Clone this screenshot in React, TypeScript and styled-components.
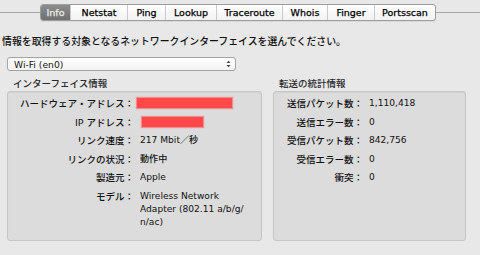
import React from 'react';
import styled, { createGlobalStyle } from 'styled-components';

const GlobalStyle = createGlobalStyle`
  html, body {
    margin: 0;
    padding: 0;
    background: #e8e8e8;
  }
`;

const Window = styled.div`
  width: 480px;
  height: 255px;
  overflow: hidden;
  background: #e8e8e8;
  font-family: 'DejaVu Sans', 'Noto Sans CJK JP', sans-serif;
  font-size: 9.5px;
  font-weight: 500;
  color: #111;
  display: flex;
  flex-direction: column;
`;

const TabRow = styled.div`
  display: flex;
  align-items: center;
  padding-top: 4px;
`;

const Rule = styled.div<{ $w?: number }>`
  height: 1px;
  background: #a6a6a6;
  ${(p) => (p.$w ? `width: ${p.$w}px;` : 'flex: 1;')}
`;

const Tabs = styled.div`
  display: flex;
  height: 17px;
  border: 1px solid #9d9d9d;
  border-radius: 3px;
  box-sizing: border-box;
  background: linear-gradient(#ffffff, #f2f2f2);
  box-shadow: 0 1px 0 rgba(0, 0, 0, 0.06);
  overflow: hidden;
`;

const Tab = styled.div<{ $active?: boolean; $w: number }>`
  width: ${(p) => p.$w}px;
  display: flex;
  align-items: center;
  justify-content: center;
  font-size: 9.5px;
  color: ${(p) => (p.$active ? '#ececec' : '#000')};
  background: ${(p) => (p.$active ? 'linear-gradient(#8c8c8c, #707070)' : 'transparent')};
  -webkit-text-stroke: 0.25px ${(p) => (p.$active ? '#ececec' : '#000')};
  & + & {
    border-left: 1px solid #c9c9c9;
  }
`;

const Prompt = styled.div`
  margin: 14px 0 0 2px;
  line-height: 13px;
  font-size: 9.9px;
`;

const Popup = styled.div`
  margin: 9px 0 0 7px;
  width: 229px;
  height: 14px;
  box-sizing: border-box;
  border: 1px solid #a3a3a3;
  border-radius: 3px;
  background: linear-gradient(#ffffff, #f3f3f3);
  display: flex;
  align-items: center;
  justify-content: space-between;
  padding: 0 4px 0 6px;
  font-size: 9.2px;
`;

const Arrows = styled.svg`
  width: 5px;
  height: 8px;
`;

const Panels = styled.div`
  display: grid;
  grid-template-columns: 255px 193px;
  column-gap: 11px;
  padding: 6px 0 0 7px;
`;

const Section = styled.div`
  display: flex;
  flex-direction: column;
`;

const SectionTitle = styled.div`
  padding-left: 6px;
  line-height: 13px;
  font-size: 9.5px;
  color: #2a2a2a;
  margin-bottom: 1px;
`;

const Box = styled.div<{ $label: number }>`
  height: 150px;
  box-sizing: border-box;
  border: 1px solid #c6c6c6;
  border-radius: 3px;
  background: #dcdcdc;
  box-shadow: inset 0 1px 1px rgba(0, 0, 0, 0.05);
  display: grid;
  grid-template-columns: ${(p) => p.$label}px 1fr;
  column-gap: 6px;
  row-gap: 5.6px;
  align-content: start;
  padding-top: 5px;
`;

const Label = styled.div`
  text-align: right;
  line-height: 13px;
  white-space: nowrap;
`;

const Value = styled.div`
  line-height: 13px;
  padding-right: 6px;
  font-size: 9.1px;
`;

const Redact = styled.span<{ $w: number; $ml: number }>`
  display: block;
  width: ${(p) => p.$w}px;
  height: 10px;
  margin: 1px 0 0 ${(p) => p.$ml}px;
  background: #ff4848;
  box-shadow: 0 0 1px 1px rgba(255, 90, 90, 0.6);
`;

const tabs = [
  { name: 'Info', w: 29, active: true },
  { name: 'Netstat', w: 56 },
  { name: 'Ping', w: 37 },
  { name: 'Lookup', w: 50 },
  { name: 'Traceroute', w: 65 },
  { name: 'Whois', w: 44 },
  { name: 'Finger', w: 46 },
  { name: 'Portsscan', w: 60 },
];

const stats = [
  ['送信パケット数：', '1,110,418'],
  ['送信エラー数：', '0'],
  ['受信パケット数：', '842,756'],
  ['受信エラー数：', '0'],
  ['衝突：', '0'],
];

export default function App() {
  return (
    <Window>
      <GlobalStyle />
      <TabRow>
        <Rule $w={40} />
        <Tabs>
          {tabs.map((t) => (
            <Tab key={t.name} $w={t.w} $active={t.active}>
              {t.name}
            </Tab>
          ))}
        </Tabs>
        <Rule />
      </TabRow>

      <Prompt>情報を取得する対象となるネットワークインターフェイスを選んでください。</Prompt>

      <Popup>
        <span>Wi-Fi (en0)</span>
        <Arrows viewBox="0 0 5 8">
          <path d="M0.5 3 L2.5 0.8 L4.5 3 Z M0.5 5 L2.5 7.2 L4.5 5 Z" fill="#444" />
        </Arrows>
      </Popup>

      <Panels>
        <Section>
          <SectionTitle>インターフェイス情報</SectionTitle>
          <Box $label={126}>
            <Label>ハードウェア・アドレス：</Label>
            <Value>
              <Redact $w={95} $ml={-3} />
            </Value>
            <Label>IP アドレス：</Label>
            <Value>
              <Redact $w={61} $ml={2} />
            </Value>
            <Label>リンク速度：</Label>
            <Value>217 Mbit／秒</Value>
            <Label>リンクの状況：</Label>
            <Value>動作中</Value>
            <Label>製造元：</Label>
            <Value>Apple</Value>
            <Label>モデル：</Label>
            <Value>
              Wireless Network Adapter (802.11 a/b/g/<wbr />n/ac)
            </Value>
          </Box>
        </Section>
        <Section>
          <SectionTitle>転送の統計情報</SectionTitle>
          <Box $label={89}>
            {stats.map(([k, v]) => (
              <React.Fragment key={k}>
                <Label>{k}</Label>
                <Value>{v}</Value>
              </React.Fragment>
            ))}
          </Box>
        </Section>
      </Panels>
    </Window>
  );
}
